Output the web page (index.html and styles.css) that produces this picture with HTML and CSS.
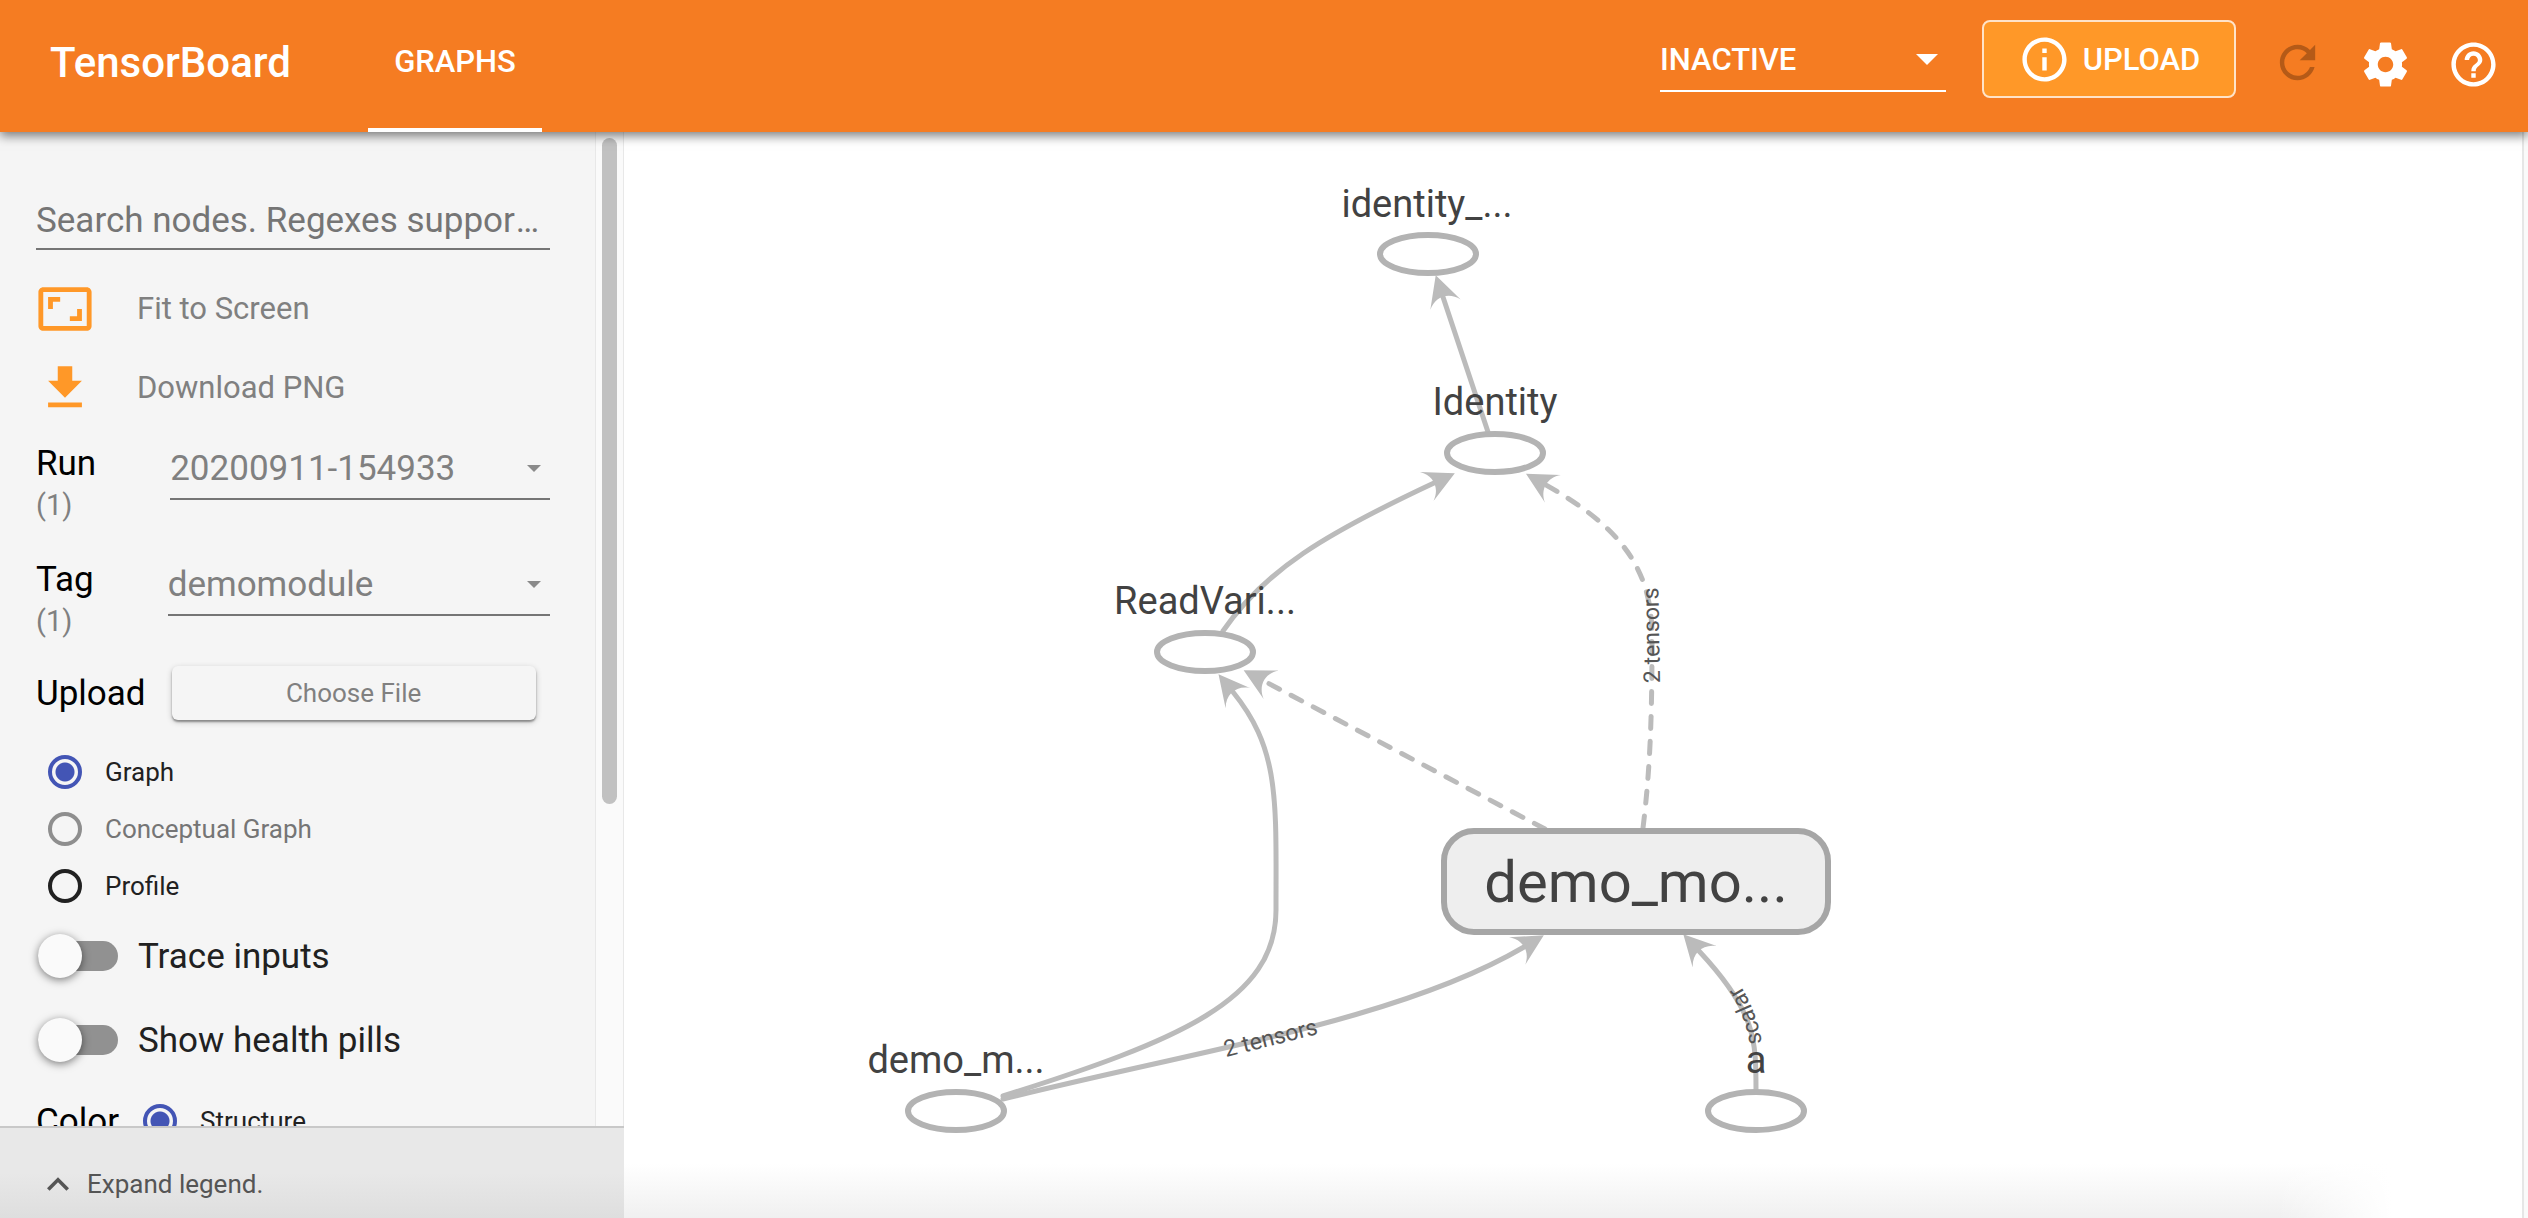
FILE: index.html
```html
<!DOCTYPE html>
<html lang="en">
<head>
<meta charset="utf-8">
<title>TensorBoard</title>
<link rel="stylesheet" href="styles.css">
</head>
<body>
<header class="toolbar">
  <h1 class="brand">TensorBoard</h1>
  <nav class="tabs"><a class="tab" href="#graphs">GRAPHS</a></nav>
  <div class="actions">
    <div class="dashboards">
      <select class="dashboards-select" aria-label="Inactive dashboards"><option>INACTIVE</option></select>
      <svg class="caret caret-white" viewBox="0 0 22 11" aria-hidden="true"><path d="M0 0h22L11 11z"/></svg>
    </div>
    <button class="upload-button" type="button">
      <svg class="icon icon-info" viewBox="0 0 24 24" aria-hidden="true"><path d="M11 17h2v-6h-2v6zm1-15C6.48 2 2 6.48 2 12s4.480 10 10 10 10-4.480 10-10S17.520 2 12 2zm0 18c-4.410 0-8-3.590-8-8s3.590-8 8-8 8 3.590 8 8-3.590 8-8 8zM11 9h2V7h-2v2z"/></svg>
      <span>UPLOAD</span>
    </button>
    <button class="icon-button" type="button" aria-label="Reload" disabled>
      <svg class="icon" viewBox="0 0 24 24"><path d="M17.650 6.350C16.200 4.900 14.210 4 12 4c-4.420 0-7.990 3.580-7.990 8s3.570 8 7.990 8c3.730 0 6.840-2.550 7.730-6h-2.080c-.82 2.330-3.040 4-5.650 4-3.310 0-6-2.690-6-6s2.690-6 6-6c1.660 0 3.140.69 4.220 1.780L13 11h7V4l-2.350 2.350z"/></svg>
    </button>
    <button class="icon-button" type="button" aria-label="Settings">
      <svg class="icon" viewBox="0 0 24 24"><path d="M19.430 12.980c.04-.32.07-.64.07-.98s-.03-.66-.07-.98l2.110-1.650c.19-.15.24-.42.12-.64l-2-3.460c-.12-.22-.39-.3-.61-.22l-2.490 1c-.52-.4-1.080-.73-1.690-.98l-.38-2.650C14.460 2.180 14.250 2 14 2h-4c-.25 0-.46.18-.49.42l-.38 2.650c-.61.25-1.170.59-1.690.98l-2.490-1c-.23-.09-.49 0-.61.22l-2 3.460c-.13.22-.07.49.12.64l2.110 1.650c-.04.32-.07.65-.07.98s.03.66.07.98l-2.110 1.650c-.19.15-.24.42-.12.64l2 3.460c.12.22.39.3.61.22l2.490-1c.52.4 1.080.73 1.690.98l.38 2.650c.03.24.24.42.49.42h4c.25 0 .46-.18.49-.42l.38-2.650c.61-.25 1.170-.59 1.690-.98l2.490 1c.23.09.49 0 .61-.22l2-3.460c.12-.22.07-.49-.12-.64l-2.110-1.650zM12 15.500c-1.930 0-3.500-1.570-3.500-3.500s1.570-3.500 3.500-3.500 3.500 1.570 3.500 3.500-1.570 3.500-3.500 3.500z"/></svg>
    </button>
    <button class="icon-button" type="button" aria-label="Help">
      <svg class="icon" viewBox="0 0 24 24"><path d="M11 18h2v-2h-2v2zm1-16C6.480 2 2 6.480 2 12s4.480 10 10 10 10-4.480 10-10S17.520 2 12 2zm0 18c-4.410 0-8-3.590-8-8s3.590-8 8-8 8 3.590 8 8-3.590 8-8 8zm0-14c-2.210 0-4 1.790-4 4h2c0-1.100.9-2 2-2s2 .9 2 2c0 2-3 1.750-3 5h2c0-2.250 3-2.500 3-5 0-2.210-1.790-4-4-4z"/></svg>
    </button>
  </div>
</header>
<div class="workspace">
  <aside class="sidebar">
    <div class="scroller">
      <form class="controls">
        <input class="search" type="text" aria-label="Search nodes" placeholder="Search nodes. Regexes supported.">
        <button class="tool" type="button">
          <svg class="tool-icon" viewBox="0 0 24 24" aria-hidden="true"><path d="M19 12h-2v3h-3v2h5v-5zM7 9h3V7H5v5h2V9zm14-6H3c-1.100 0-2 .9-2 2v14c0 1.100.9 2 2 2h18c1.100 0 2-.9 2-2V5c0-1.100-.9-2-2-2zm0 16.010H3V4.990h18v14.020z"/></svg>
          <span>Fit to Screen</span>
        </button>
        <button class="tool" type="button">
          <svg class="tool-icon" viewBox="0 0 24 24" aria-hidden="true"><path d="M19 9h-4V3H9v6H5l7 7 7-7zM5 18v2h14v-2H5z"/></svg>
          <span>Download PNG</span>
        </button>
        <div class="field">
          <label class="field-label" for="run">Run <small>(1)</small></label>
          <div class="picker">
            <select id="run"><option>20200911-154933</option></select>
            <svg class="caret" viewBox="0 0 14 7" aria-hidden="true"><path d="M0 0h14L7 7z"/></svg>
          </div>
        </div>
        <div class="field">
          <label class="field-label" for="tag">Tag <small>(1)</small></label>
          <div class="picker">
            <select id="tag"><option>demomodule</option></select>
            <svg class="caret" viewBox="0 0 14 7" aria-hidden="true"><path d="M0 0h14L7 7z"/></svg>
          </div>
        </div>
        <div class="upload-row">
          <span class="row-title">Upload</span>
          <button class="file-button" type="button">Choose File</button>
        </div>
        <div class="radios">
          <label class="radio"><input type="radio" name="kind" checked>Graph</label>
          <label class="radio"><input type="radio" name="kind" disabled>Conceptual Graph</label>
          <label class="radio"><input type="radio" name="kind">Profile</label>
        </div>
        <label class="toggle"><input type="checkbox">Trace inputs</label>
        <label class="toggle"><input type="checkbox">Show health pills</label>
        <div class="color-row">
          <span class="row-title">Color</span>
          <label class="radio"><input type="radio" name="color" checked>Structure</label>
        </div>
      </form>
      <div class="track" aria-hidden="true"><div class="thumb"></div></div>
    </div>
    <button class="legend" type="button">
      <svg class="legend-icon" viewBox="0 0 12 8" aria-hidden="true"><path d="M6 0L0 6l1.410 1.410L6 2.830l4.590 4.580L12 6z"/></svg>
      <span>Expand legend.</span>
    </button>
  </aside>
  <main class="canvas">
    <svg class="graph" viewBox="624 132 1900 1086" role="img" aria-label="Computation graph">
      <defs>
        <marker id="arrow" viewBox="0 0 32 32" refX="8" refY="16" markerWidth="32" markerHeight="32" markerUnits="userSpaceOnUse" orient="auto"><path class="arrowhead" d="M0 0L31 16L0 32C11 23 11 9 0 0z"/></marker>
      </defs>
      <path class="edge" d="M1488 432L1443 297" marker-end="url(#arrow)"/>
      <path class="edge" d="M1223 631C1265 570 1325 534 1434 483" marker-end="url(#arrow)"/>
      <path class="edge" d="M1003 1096C1180 1040 1276 1000 1276 910C1276 800 1280 750 1233 692" marker-end="url(#arrow)"/>
      <path class="edge dashed" d="M1545 829L1264 681" marker-end="url(#arrow)"/>
      <path class="edge dashed" d="M1643 828C1650 770 1652 720 1652 640C1653 570 1622 528 1546 485" marker-end="url(#arrow)"/>
      <path class="edge" d="M1003 1099C1200 1050 1400 1020 1524 947" marker-end="url(#arrow)"/>
      <path class="edge" d="M1756 1090C1756 1040 1756 1012 1699 951" marker-end="url(#arrow)"/>
      <path id="scalar-path" class="guide" d="M1762 1043Q1757 1010 1737 980"/>
      <text class="edge-label" transform="translate(1660 683) rotate(-91)">2 tensors</text>
      <text class="edge-label" transform="translate(1226 1057) rotate(-14)">2 tensors</text>
      <text class="edge-label"><textPath href="#scalar-path">scalar</textPath></text>
      <g class="op">
        <ellipse cx="1428" cy="254" rx="48" ry="19"/><text x="1427" y="217">identity_...</text>
        <ellipse cx="1495" cy="453" rx="48" ry="19"/><text x="1495" y="415">Identity</text>
        <ellipse cx="1205" cy="652" rx="48" ry="19"/><text x="1205" y="614">ReadVari...</text>
        <ellipse cx="956" cy="1111" rx="48" ry="19"/><text x="956" y="1073">demo_m...</text>
        <ellipse cx="1756" cy="1111" rx="48" ry="19"/><text x="1756" y="1073">a</text>
      </g>
      <rect class="scope" x="1444" y="831" width="384" height="101" rx="30"/>
      <text class="scope-label" x="1636" y="902">demo_mo...</text>
    </svg>
  </main>
</div>
</body>
</html>
```
FILE: styles.css
```css
* { box-sizing: border-box; }
body {
  margin: 0;
  height: 100vh;
  display: flex;
  flex-direction: column;
  overflow: hidden;
  font-family: Roboto, sans-serif;
  background: #fff;
}
button, input, select { font: inherit; color: inherit; margin: 0; }
button { background: none; border: 0; padding: 0; }
select { appearance: none; background: none; border: 0; padding: 0; border-radius: 0; width: 100%; opacity: 1; }
svg { flex: none; }

.toolbar {
  height: 132px;
  flex: none;
  display: flex;
  align-items: stretch;
  position: relative;
  z-index: 2;
  padding: 0 11px 0 50px;
  background: #f57c22;
  color: #fff;
  box-shadow: 0 4px 10px rgba(0, 0, 0, .5);
}
.brand { margin: 0; width: 318px; font-size: 42px; font-weight: 500; line-height: 126px; }
.tabs { display: flex; }
.tab {
  width: 174px;
  text-align: center;
  font-size: 31px;
  font-weight: 500;
  line-height: 123px;
  color: #fff;
  text-decoration: none;
  border-bottom: 4px solid #fff;
}
.actions { margin-left: auto; display: flex; align-items: flex-start; }
.dashboards {
  width: 286px;
  height: 62px;
  margin: 30px 36px 0 0;
  padding: 0 8px 2px 0;
  display: flex;
  align-items: center;
  border-bottom: 2px solid #fff;
}
.dashboards-select { font-size: 31px; font-weight: 500; height: 60px; }
.caret { width: 14px; height: 7px; fill: #8a8a8a; }
.caret-white { width: 22px; height: 11px; fill: #fff; }
.upload-button {
  width: 254px;
  height: 78px;
  margin: 20px 17px 0 0;
  border: 2px solid #ffe3c8;
  border-radius: 8px;
  background: #ff9828;
  display: flex;
  align-items: center;
  justify-content: center;
  gap: 12px;
  font-size: 31px;
  font-weight: 500;
}
.icon { width: 53px; height: 53px; fill: #fff; display: block; margin: 0 auto; }
.icon-info { margin: 0; }
.icon-button { margin: 38px 0 0; width: 88px; }
.icon-button:disabled { margin-top: 36px; }
.icon-button:disabled .icon { fill: #b55a17; }

.workspace { flex: 1; min-height: 0; display: flex; }
.sidebar { width: 624px; flex: none; display: flex; flex-direction: column; background: #f5f5f5; }
.scroller { flex: 1; min-height: 0; display: flex; overflow: hidden; }
.controls { flex: 1; min-width: 0; padding: 61px 45px 0 36px; font-size: 35px; }
.track { width: 29px; background: #fafafa; border: solid #e8e8e8; border-width: 0 1px; padding: 6px; height: 100%; }
.thumb { height: 666px; border-radius: 8px; background: #c1c1c1; }

.search {
  display: block;
  width: 100%;
  height: 57px;
  border: 0;
  border-bottom: 2px solid #757575;
  padding: 0;
  background: none;
  outline: 0;
  text-overflow: ellipsis;
}
.search::placeholder { color: #757575; opacity: 1; text-overflow: ellipsis; }
.tool { display: flex; align-items: center; gap: 43px; height: 79px; font-size: 31px; color: #808080; }
.search + .tool { margin-top: 19px; }
.tool-icon { width: 58px; height: 58px; fill: #ff9828; }

.field { display: flex; gap: 74px; height: 116px; }
.field-label { line-height: 44px; color: #000; padding-top: 15px; }
.field-label small { display: block; font-size: 29px; line-height: 38px; color: #808080; }
.picker { flex: 1; height: 73px; display: flex; align-items: center; border-bottom: 2px solid #757575; color: #808080; padding: 12px 9px 0 0; }

.upload-row { display: flex; align-items: center; height: 68px; }
.row-title { color: #000; }
.file-button {
  width: 364px;
  height: 54px;
  margin-left: 26px;
  border-radius: 6px;
  font-size: 26px;
  color: #808080;
  box-shadow: 0 2px 2px rgba(0, 0, 0, .35), 0 2px 6px rgba(0, 0, 0, .2);
}
.radios { padding: 16px 0 0 12px; }
.radio { display: flex; align-items: center; height: 57px; gap: 23px; font-size: 26px; color: #212121; }
.radio input {
  appearance: none;
  width: 34px;
  height: 34px;
  border: 4px solid #212121;
  border-radius: 50%;
}
.radio input:checked { border-color: #4355b5; background: radial-gradient(circle, #4355b5 9px, transparent 10px); }
.radio:has(input:disabled) { color: #757575; }
.radio input:disabled { border-color: #8e8e8e; }
.toggle { display: flex; align-items: center; height: 84px; gap: 20px; color: #212121; }
.toggle input {
  appearance: none;
  width: 80px;
  height: 30px;
  margin: 0 0 0 2px;
  border-radius: 15px;
  background: #919191;
  position: relative;
}
.toggle input::before {
  content: "";
  position: absolute;
  left: 0;
  top: -7px;
  width: 44px;
  height: 44px;
  border-radius: 50%;
  background: #fafafa;
  box-shadow: 0 2px 8px rgba(0, 0, 0, .5);
}
.color-row { display: flex; align-items: center; gap: 24px; height: 78px; }

.legend {
  height: 92px;
  flex: none;
  display: flex;
  align-items: center;
  gap: 18px;
  padding: 22px 0 0 47px;
  border-top: 2px solid #c8c8c8;
  background: linear-gradient(#e8e8e8 50%, #dedede);
  font-size: 26px;
  color: #555;
}
.legend-icon { width: 22px; height: 15px; fill: #555; }

.canvas {
  flex: 1;
  min-width: 0;
  display: flex;
  border-right: 4px solid #fafafa;
  box-shadow: inset -2px 0 #e6e6e6;
  background: linear-gradient(to right, transparent 87%, #fff 93%), linear-gradient(#fff 95%, #f0f0f0);
}
.graph { width: 100%; height: 100%; }
.edge { fill: none; stroke: #bbb; stroke-width: 5; stroke-linecap: round; }
.dashed { stroke-dasharray: 12 13; }
.guide { fill: none; }
.arrowhead { fill: #bbb; }
.edge-label { font-size: 23px; fill: #555; }
.op ellipse { fill: #fff; stroke: #b3b3b3; stroke-width: 6; }
.op text { font-size: 38px; text-anchor: middle; fill: #424242; }
.scope { fill: #eee; stroke: #a6a6a6; stroke-width: 6; }
.scope-label { font-size: 58px; text-anchor: middle; fill: #424242; }
```
